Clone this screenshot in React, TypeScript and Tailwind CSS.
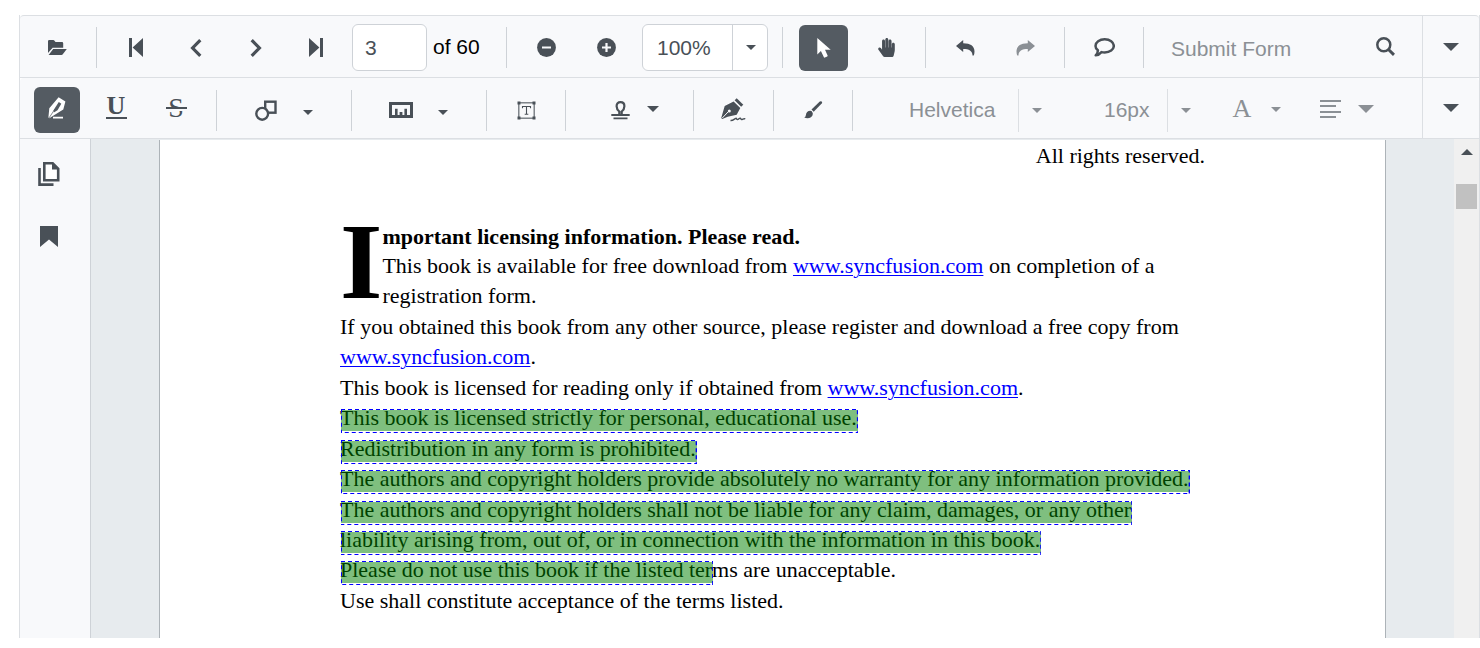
import type { ReactNode } from 'react';
import { FaHandPaper } from 'react-icons/fa';

type IconProps = { className?: string };

function Caret({ size, className = '' }: { size: 10 | 12 | 16; className?: string }) {
  return (
    <svg width={size} height={size / 2} viewBox="0 0 16 8" className={className} aria-hidden="true">
      <path d="M0 0h16L8 8z" fill="currentColor" />
    </svg>
  );
}

function OpenIcon() {
  return (
    <svg width="19" height="15" viewBox="0 0 19 15" fill="currentColor" aria-hidden="true">
      <path d="M0 13V1.2Q0 0 1.2 0H5.3Q6 0 6.5.7L7.5 2H14Q15.2 2 15.2 3.2V7.7H4.6Z" />
      <path d="M5.2 9H18.8L14.8 14.3Q14.3 15 13.5 15H.6Z" />
    </svg>
  );
}

function EdgeIcon({ className = '' }: IconProps) {
  return (
    <svg width="14" height="19" viewBox="0 0 14 19" fill="currentColor" className={className} aria-hidden="true">
      <path d="M0 0h3v19H0zM14 0v19L3.6 9.5z" />
    </svg>
  );
}

function ChevronIcon({ className = '' }: IconProps) {
  return (
    <svg width="12" height="18" viewBox="0 0 12 18" fill="none" stroke="currentColor" strokeWidth="3.2" className={className} aria-hidden="true">
      <path d="M10.3 1.2L2.6 9l7.7 7.8" />
    </svg>
  );
}

function ZoomIcon({ plus = false }: { plus?: boolean }) {
  return (
    <svg width="19" height="19" viewBox="0 0 19 19" aria-hidden="true">
      <circle cx="9.5" cy="9.5" r="9.4" fill="currentColor" />
      <path d={plus ? 'M5 9.5h9M9.5 5v9' : 'M5 9.5h9'} stroke="#f8f9fb" strokeWidth="2.2" />
    </svg>
  );
}

function PointerIcon() {
  return (
    <svg width="14" height="20" viewBox="0 0 14 20" fill="currentColor" aria-hidden="true">
      <path d="M.3 0v16.4l3.6-3.3 3 6.2q.3.6 1 .3l2.3-1q.7-.3.4-1L8 11.7h5.7z" />
    </svg>
  );
}

function UndoIcon({ className = '' }: IconProps) {
  return (
    <svg width="19" height="16" viewBox="0 0 19 16" fill="currentColor" className={className} aria-hidden="true">
      <path d="M0 6L7.2 0v3.2C14.5 3.2 18.5 6 18.5 11.500q0 2-.8 4h-1.200C16.500 10.800 13 9 7.200 9v3z" />
    </svg>
  );
}

function CommentIcon() {
  return (
    <svg width="21" height="19" viewBox="0 0 21 19" fill="none" stroke="currentColor" strokeWidth="2.5" strokeLinejoin="round" aria-hidden="true">
      <path d="M10.7 1.3c5.200 0 9.100 2.900 9.100 6.600s-3.900 6.600-9.100 6.600q-1.700 0-3.200-.4Q5 17 1.700 17.300 4 15 3.900 12.300 1.500 10.400 1.500 7.900c0-3.700 4-6.600 9.200-6.600z" />
    </svg>
  );
}

function SearchIcon() {
  return (
    <svg width="19" height="19" viewBox="0 0 19 19" fill="none" stroke="currentColor" aria-hidden="true">
      <circle cx="7.8" cy="7.8" r="6.5" strokeWidth="2.5" />
      <path d="M12.5 12.5l5.500 5.300" strokeWidth="3" />
    </svg>
  );
}

function HighlightIcon() {
  return (
    <svg width="18" height="22" viewBox="0 0 18 22" aria-hidden="true">
      <path d="M10.6.3L17.4 4.600 15.300 12.500 6.800 17.800 1.300 21.300.4 20.500 1.300 11.300z" fill="currentColor" />
      <path d="M10.800 5l2.500 1.800-3.800 6.400-3.700 2.300-.3-2.300z" fill="#545b62" />
      <path d="M6.800 12.200L1 21" stroke="#545b62" strokeWidth=".7" />
      <path d="M5 20.600h10" stroke="currentColor" strokeWidth="1.600" />
    </svg>
  );
}

function ShapesIcon() {
  return (
    <svg width="22" height="21" viewBox="0 0 22 21" strokeWidth="2.4" stroke="currentColor" fill="#f8f9fb" aria-hidden="true">
      <rect x="10.2" y="1.7" width="10.300" height="11" />
      <circle cx="7.200" cy="13.800" r="5.900" />
    </svg>
  );
}

function MeasureIcon() {
  return (
    <svg width="24" height="16" viewBox="0 0 24 16" fill="none" stroke="currentColor" aria-hidden="true">
      <rect x="1.5" y="1.5" width="21" height="13" strokeWidth="3" />
      <path d="M7.3 14V6.800M16.700 14V6.800" strokeWidth="2.600" />
      <path d="M12 14v-4" strokeWidth="2.800" />
    </svg>
  );
}

function FreeTextIcon() {
  return (
    <svg width="19" height="19" viewBox="0 0 19 19" fill="none" stroke="currentColor" aria-hidden="true">
      <rect x="1.8" y="1.8" width="15.400" height="15.400" strokeWidth="1.300" opacity=".8" />
      <path d="M.5.5h3v3h-3zM15.500.5h3v3h-3zM.5 15.500h3v3h-3zM15.500 15.500h3v3h-3z" fill="currentColor" stroke="none" />
      <path d="M5.500 7.300V5.500h8v1.800M9.500 5.500v7.700M7.700 13.200h3.600" strokeWidth="1.100" />
    </svg>
  );
}

function StampIcon() {
  return (
    <svg width="19" height="19" viewBox="0 0 19 19" fill="none" stroke="currentColor" strokeWidth="2.2" aria-hidden="true">
      <path d="M8.300 13.500V10.500Q5.600 8.200 5.600 5.200 5.600 1.200 9.500 1.200t3.900 4q0 3-2.700 5.300v3" />
      <path d="M.3 14h18.400" strokeWidth="2" />
      <path d="M2.500 17.400h14" strokeWidth="1.800" />
    </svg>
  );
}

function SignatureIcon() {
  return (
    <svg width="25" height="24" viewBox="0 0 25 24" aria-hidden="true">
      <path d="M15.7.3l6.600 6.500-2.200 2L13.600 2.300z" fill="currentColor" />
      <path d="M12.600 3.600l6.700 6.300-3.600 6.800-9 2.100L1.300 21 .2 19.900 3.700 8z" fill="currentColor" />
      <path d="M1.300 20l6-6.300" stroke="#f8f9fb" strokeWidth="1" />
      <circle cx="8.300" cy="12.900" r="1.500" fill="#f8f9fb" />
      <path d="M9.500 22.500c2.500.3 3.800-1.500 5.300-2.200 1-.3.600 1.400 1.700 1.300 1.300-.2 1.600-1.600 2.700-1.400 1 .2.500 1.700 1.800 1.300 1.200-.4 1.700-1.200 3.300-.6" fill="none" stroke="currentColor" strokeWidth="1.400" />
    </svg>
  );
}

function BrushIcon() {
  return (
    <svg width="19" height="18" viewBox="0 0 19 18" fill="currentColor" aria-hidden="true">
      <path d="M15.800.6q1-.8 1.900 0t0 1.900L9.700 10.800 7.500 8.600z" />
      <path d="M6.300 9.800q1.800.1 2.400 2.200.5 2.600-1.700 4.200-3 2-6.800.4 1.500-.5 1.700-2.700.4-3.800 4.400-4.100z" />
    </svg>
  );
}

function AlignIcon() {
  return (
    <svg width="21" height="18" viewBox="0 0 21 18" stroke="currentColor" strokeWidth="2" aria-hidden="true">
      <path d="M0 1h21M0 6h16M0 12h21M0 17h16" />
    </svg>
  );
}

function PagesIcon() {
  return (
    <svg width="22" height="24" viewBox="0 0 22 24" fill="none" stroke="currentColor" strokeWidth="2.6" aria-hidden="true">
      <path d="M6.300 1.300h8.400l5.500 5.500v11.400H6.300z" fill="#fff" />
      <path d="M14 1v6.500h6.500z" fill="currentColor" stroke="none" />
      <path d="M1.500 6v16.600h14" />
    </svg>
  );
}

function BookmarkIcon() {
  return (
    <svg width="18" height="21" viewBox="0 0 18 21" fill="currentColor" aria-hidden="true">
      <path d="M0 0h18v21l-9-7.500L0 21z" />
    </svg>
  );
}

function Separator() {
  return <span className="mx-[9px] h-[41px] w-px shrink-0 bg-[#ced2d7]" />;
}

function Tool({ label, className = 'w-[60px]', children }: { label: string; className?: string; children: ReactNode }) {
  return (
    <button type="button" aria-label={label} className={`flex h-[46px] shrink-0 items-center justify-center ${className}`}>
      {children}
    </button>
  );
}

function OverflowButton() {
  return (
    <button type="button" aria-label="More tools" className="flex w-[57px] shrink-0 items-center justify-center self-stretch border-l border-[#dcdfe3]">
      <Caret size={16} />
    </button>
  );
}

function Combo({ label, value, className, dividerClass }: { label: string; value: string; className: string; dividerClass: string }) {
  return (
    <div className="relative flex shrink-0">
      <select aria-label={label} className={`appearance-none ${className}`}>
        <option>{value}</option>
      </select>
      <span className={`pointer-events-none absolute inset-y-px right-0 flex w-[36px] items-center justify-center border-l ${dividerClass}`}>
        <Caret size={10} />
      </span>
    </div>
  );
}

function Toolbar() {
  return (
    <div role="toolbar" aria-label="Navigation" className="flex h-[63px] items-center overflow-hidden rounded-t border-y border-[#dcdfe3] bg-[#f8f9fb]">
      <div className="flex min-w-0 flex-1 items-center overflow-hidden pt-[2px] pl-[7px]">
        <Tool label="Open file"><OpenIcon /></Tool>
        <Separator />
        <Tool label="First page"><EdgeIcon /></Tool>
        <Tool label="Previous page"><ChevronIcon /></Tool>
        <Tool label="Next page"><ChevronIcon className="rotate-180" /></Tool>
        <Tool label="Last page"><EdgeIcon className="rotate-180" /></Tool>
        <input
          type="text"
          aria-label="Page number"
          defaultValue="3"
          className="ml-[6px] h-[47px] w-[75px] shrink-0 rounded-md border border-[#ced2d7] bg-white px-3 text-[21px]"
        />
        <span className="ml-[6px] w-[64px] shrink-0 pb-[2px] text-[21px] whitespace-nowrap text-black">of 60</span>
        <Separator />
        <Tool label="Zoom out"><ZoomIcon /></Tool>
        <Tool label="Zoom in"><ZoomIcon plus /></Tool>
        <div className="mr-[5px] ml-[6px]">
          <Combo
            label="Zoom level"
            value="100%"
            className="h-[47px] w-[126px] rounded-md border border-[#ced2d7] bg-white pl-[14px] text-[21px]"
            dividerClass="border-[#ced2d7]"
          />
        </div>
        <Separator />
        <Tool label="Text selection" className="mr-2 ml-[7px] w-[49px] rounded-md bg-[#545b62] text-white"><PointerIcon /></Tool>
        <Tool label="Pan"><FaHandPaper size={19} /></Tool>
        <Separator />
        <Tool label="Undo"><UndoIcon /></Tool>
        <Tool label="Redo"><UndoIcon className="-scale-x-100 text-[#8b9095]" /></Tool>
        <Separator />
        <Tool label="Comments"><CommentIcon /></Tool>
        <Separator />
        <button type="button" className="ml-[18px] shrink-0 pt-[2px] text-[21px] text-[#8b9095]">Submit Form</button>
        <Tool label="Search" className="mr-[13px] ml-auto w-12 pb-[2px]"><SearchIcon /></Tool>
      </div>
      <OverflowButton />
    </div>
  );
}

function AnnotationToolbar() {
  return (
    <div role="toolbar" aria-label="Annotations" className="flex h-[61px] items-center overflow-hidden rounded-t border-b border-[#dcdfe3] bg-[#f8f9fb]">
      <div className="flex min-w-0 flex-1 items-center overflow-hidden pt-1 pl-[14px]">
        <Tool label="Highlight" className="mr-[6px] w-[46px] rounded-md bg-[#545b62] pb-1 text-white"><HighlightIcon /></Tool>
        <Tool label="Underline" className="w-[60px] pb-[5px]">
          <span className="flex h-[22px] w-[21px] items-center justify-center border-b-2 border-current pb-[2px] font-['Liberation_Serif',serif] text-[26px] leading-none font-bold">U</span>
        </Tool>
        <Tool label="Strikethrough" className="mr-px w-[60px] pb-[5px]">
          <span className="relative flex h-[22px] w-[21px] items-center justify-center font-['Liberation_Serif',serif] text-[28px] leading-none">
            S
            <span className="absolute inset-x-0 top-[10px] h-1 border-t-2 border-current bg-[#f8f9fb]" />
          </span>
        </Tool>
        <Separator />
        <Tool label="Shapes" className="w-[116px] gap-[26px]"><ShapesIcon /><Caret size={10} className="mt-1" /></Tool>
        <Separator />
        <Tool label="Measure" className="w-[116px] gap-[25px] pr-[2px]"><MeasureIcon /><Caret size={10} className="mt-1" /></Tool>
        <Separator />
        <Tool label="Free text"><FreeTextIcon /></Tool>
        <Separator />
        <Tool label="Stamp" className="w-[109px] gap-[17px] pl-[10px]"><StampIcon /><Caret size={12} className="mb-[2px]" /></Tool>
        <Separator />
        <Tool label="Signature" className="w-[61px]"><SignatureIcon /></Tool>
        <Separator />
        <Tool label="Ink"><BrushIcon /></Tool>
        <Separator />
        <div className="flex items-center text-[#8b9095]">
          <div className="ml-[46px]">
            <Combo label="Font family" value="Helvetica" className="h-[45px] w-[146px] pl-px text-[21px]" dividerClass="border-[#dcdfe3]" />
          </div>
          <div className="ml-[49px]">
            <Combo label="Font size" value="16px" className="h-[45px] w-[100px] pl-px text-[21px]" dividerClass="border-[#dcdfe3]" />
          </div>
          <Tool label="Font color" className="ml-[18px] w-[72px] gap-[20px] pb-[2px]">
            <span className="font-['Liberation_Serif',serif] text-[26px] leading-none">A</span>
            <Caret size={10} />
          </Tool>
          <Tool label="Text alignment" className="ml-[18px] w-[72px] gap-[17px] pb-[2px]"><AlignIcon /><Caret size={16} /></Tool>
        </div>
      </div>
      <OverflowButton />
    </div>
  );
}

function SiteLink() {
  return (
    <a href="#syncfusion" className="text-[#0000ff] underline decoration-1 underline-offset-2">www.syncfusion.com</a>
  );
}

function Marked({ children }: { children: ReactNode }) {
  return (
    <mark className="relative bg-transparent text-inherit">
      {children}
      <span className="absolute top-[4px] -right-px left-px h-6">
        <span className="block h-[22px] border-t border-transparent bg-[#008000]/50 bg-clip-padding" />
        <svg className="absolute inset-0 size-full overflow-hidden" fill="none" stroke="#0000ff" strokeWidth="2" strokeDasharray="4 3" aria-hidden="true">
          <rect width="100%" height="100%" />
        </svg>
      </span>
    </mark>
  );
}

function Page() {
  return (
    <article className="mx-auto w-full max-w-[1227px] border-x border-[#adb3b8] bg-white px-[180px] pt-px font-['Liberation_Serif',serif] text-[22px] leading-[30px] text-black">
      <p className="text-right">All rights reserved.</p>
      <div className="mt-[51px]">
        <span className="float-left h-[80px] text-[109px] leading-[80px] font-bold">I</span>
        <h1 className="leading-[29px] font-bold">mportant licensing information. Please read.</h1>
        <p className="mb-px">
          This book is available for free download from <SiteLink /> on completion of a registration form.
        </p>
      </div>
      <p className="mb-px">
        If you obtained this book from any other source, please register and download a free copy from <SiteLink />.
      </p>
      <p>This book is licensed for reading only if obtained from <SiteLink />.</p>
      <p className="mb-px"><Marked>This book is licensed strictly for personal, educational use.</Marked></p>
      <p><Marked>Redistribution in any form is prohibited.</Marked></p>
      <p className="mb-px"><Marked>The authors and copyright holders provide absolutely no warranty for any information provided.</Marked></p>
      <p>
        <Marked>The authors and copyright holders shall not be liable for any claim, damages, or any other</Marked>
        <br />
        <Marked>liability arising from, out of, or in connection with the information in this book.</Marked>
      </p>
      <p className="mb-px"><Marked>Please do not use this book if the listed ter</Marked>ms are unacceptable.</p>
      <p>Use shall constitute acceptance of the terms listed.</p>
    </article>
  );
}

function Scrollbar() {
  return (
    <div className="flex w-[25px] shrink-0 flex-col items-center bg-[#f0f0f0] pt-[10px]">
      <Caret size={12} className="rotate-180" />
      <span className="mt-[29px] h-[25px] w-[21px] bg-[#c1c1c1]" />
    </div>
  );
}

export default function App() {
  return (
    <div className="flex h-screen flex-col bg-white pt-[15px] pb-[10px] pl-[19px] font-['Liberation_Sans',sans-serif] text-[#495057]">
      <div className="flex min-h-0 flex-1 flex-col border-x border-[#dcdfe3]">
        <Toolbar />
        <AnnotationToolbar />
        <div className="flex min-h-0 flex-1">
          <nav aria-label="Panels" className="flex w-[71px] shrink-0 flex-col border-r border-[#ced2d7] bg-[#f8f9fb] pt-1">
            <Tool label="Page thumbnails" className="my-2 w-[58px]"><PagesIcon /></Tool>
            <Tool label="Bookmarks" className="my-2 w-[58px]"><BookmarkIcon /></Tool>
          </nav>
          <main className="flex min-w-0 flex-1 overflow-hidden bg-[#e7ebee] px-[68px] pt-px">
            <Page />
          </main>
          <Scrollbar />
        </div>
      </div>
    </div>
  );
}
